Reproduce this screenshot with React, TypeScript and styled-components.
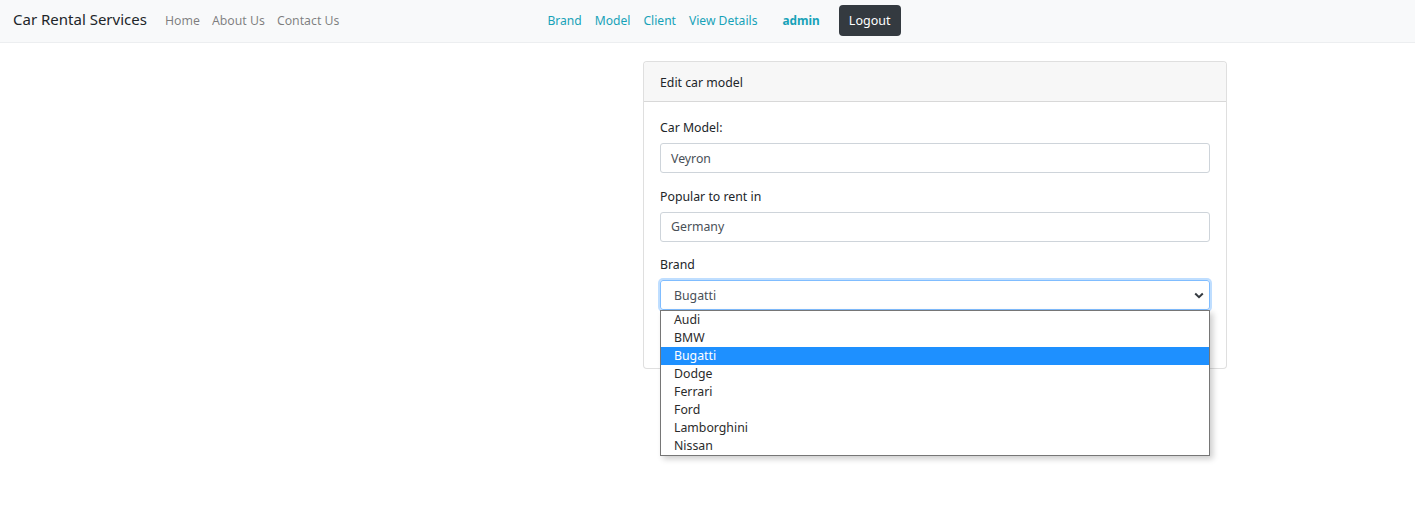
import React from "react";
import styled, { createGlobalStyle } from "styled-components";

const Global = createGlobalStyle`
  html, body { margin: 0; padding: 0; background: #fff; }
  body {
    min-height: 100vh;
    font-family: "Segoe UI", "Noto Sans", "Open Sans", sans-serif;
    color: #212529;
  }
  * { box-sizing: border-box; }
`;

const NavBar = styled.nav`
  height: 43px;
  background: #f8f9fa;
  border-bottom: 1px solid #eceef0;
  display: flex;
  align-items: center;
  padding: 0 13px;
`;

const Brand = styled.span`
  font-size: 15px;
  color: #212529;
  margin-right: 18px;
  margin-top: -4px;
`;

const NavLinks = styled.div`
  display: flex;
  align-items: center;
  gap: 12px;
  margin-top: -2px;
`;

const NavLink = styled.a<{ $teal?: boolean }>`
  font-size: ${(p) => (p.$teal ? "12.1px" : "12.3px")};
  color: ${(p) => (p.$teal ? "#17a2b8" : "rgba(0,0,0,0.5)")};
  text-decoration: none;
`;

const Center = styled.div`
  display: flex;
  align-items: center;
  margin-left: 208px;
  gap: 13px;
  margin-top: -2px;
`;

const Admin = styled.span`
  font-size: 11.8px;
  font-weight: 700;
  color: #17a2b8;
  margin-left: 12px;
`;

const LogoutButton = styled.button`
  margin-left: 6px;
  height: 31px;
  width: 62px;
  background: #343a40;
  color: #fff;
  border: none;
  border-radius: 4px;
  font-family: inherit;
  font-size: 12.5px;
  padding: 0;
`;

const Main = styled.main`
  display: grid;
  grid-template-columns: 643px 584px;
  padding-top: 18px;
`;

const Card = styled.section`
  grid-column: 2;
  border: 1px solid rgba(0, 0, 0, 0.125);
  border-radius: 4px;
  background: #fff;
`;

const CardHeader = styled.header`
  height: 40px;
  background: #f7f7f7;
  border-bottom: 1px solid rgba(0, 0, 0, 0.125);
  display: flex;
  align-items: center;
  padding: 1px 16px 0;
  font-size: 12.3px;
  border-radius: 4px 4px 0 0;
`;

const CardBody = styled.div`
  padding: 15px 16px 15px;
  display: flex;
  flex-direction: column;
`;

const Group = styled.div`
  display: flex;
  flex-direction: column;
  margin-bottom: 12.5px;
  position: relative;
`;

const Label = styled.label`
  font-size: 12.3px;
  line-height: 21px;
  margin-bottom: 5px;
`;

const Input = styled.div<{ $focus?: boolean }>`
  height: 30px;
  border: 1px solid ${(p) => (p.$focus ? "#80bdff" : "#ced4da")};
  border-radius: 3px;
  display: flex;
  align-items: center;
  padding: 0 5px 0 10px;
  font-size: 12.3px;
  color: #495057;
  box-shadow: ${(p) => (p.$focus ? "0 0 0 2px rgba(0,123,255,0.25)" : "none")};
  justify-content: space-between;
`;

const SelectValue = styled.span`
  padding-left: 3px;
`;

const Dropdown = styled.ul`
  position: absolute;
  left: 0;
  right: 0;
  top: 56px;
  margin: 0;
  padding: 0;
  list-style: none;
  background: #fff;
  border: 1px solid #767676;
  box-shadow: 3px 3px 6px rgba(0, 0, 0, 0.2);
  z-index: 5;
`;

const Option = styled.li<{ $active?: boolean }>`
  height: 18px;
  line-height: 18px;
  padding-left: 13px;
  font-size: 12.3px;
  color: ${(p) => (p.$active ? "#fff" : "#2b2b2b")};
  background: ${(p) => (p.$active ? "#1e90ff" : "transparent")};
`;

const SaveButton = styled.button`
  align-self: flex-start;
  height: 30px;
  background: #17a2b8;
  color: #fff;
  border: none;
  border-radius: 3px;
  font-size: 12.3px;
  padding: 0 12px;
`;

const brands = ["Audi", "BMW", "Bugatti", "Dodge", "Ferrari", "Ford", "Lamborghini", "Nissan"];

export default function App() {
  return (
    <>
      <Global />
      <NavBar>
        <Brand>Car Rental Services</Brand>
        <NavLinks>
          <NavLink>Home</NavLink>
          <NavLink>About Us</NavLink>
          <NavLink>Contact Us</NavLink>
        </NavLinks>
        <Center>
          <NavLink $teal>Brand</NavLink>
          <NavLink $teal>Model</NavLink>
          <NavLink $teal>Client</NavLink>
          <NavLink $teal>View Details</NavLink>
          <Admin>admin</Admin>
          <LogoutButton>Logout</LogoutButton>
        </Center>
      </NavBar>
      <Main>
        <Card>
          <CardHeader>Edit car model</CardHeader>
          <CardBody>
            <Group>
              <Label>Car Model:</Label>
              <Input>Veyron</Input>
            </Group>
            <Group>
              <Label>Popular to rent in</Label>
              <Input>Germany</Input>
            </Group>
            <Group>
              <Label>Brand</Label>
              <Input $focus>
                <SelectValue>Bugatti</SelectValue>
                <svg width="10" height="7" viewBox="0 0 10 7">
                  <path d="M1.2 1.5 L5 5.2 L8.8 1.5" stroke="#343a40" strokeWidth="2" fill="none" />
                </svg>
              </Input>
              <Dropdown>
                {brands.map((b) => (
                  <Option key={b} $active={b === "Bugatti"}>
                    {b}
                  </Option>
                ))}
              </Dropdown>
            </Group>
            <SaveButton>Update</SaveButton>
          </CardBody>
        </Card>
      </Main>
    </>
  );
}
